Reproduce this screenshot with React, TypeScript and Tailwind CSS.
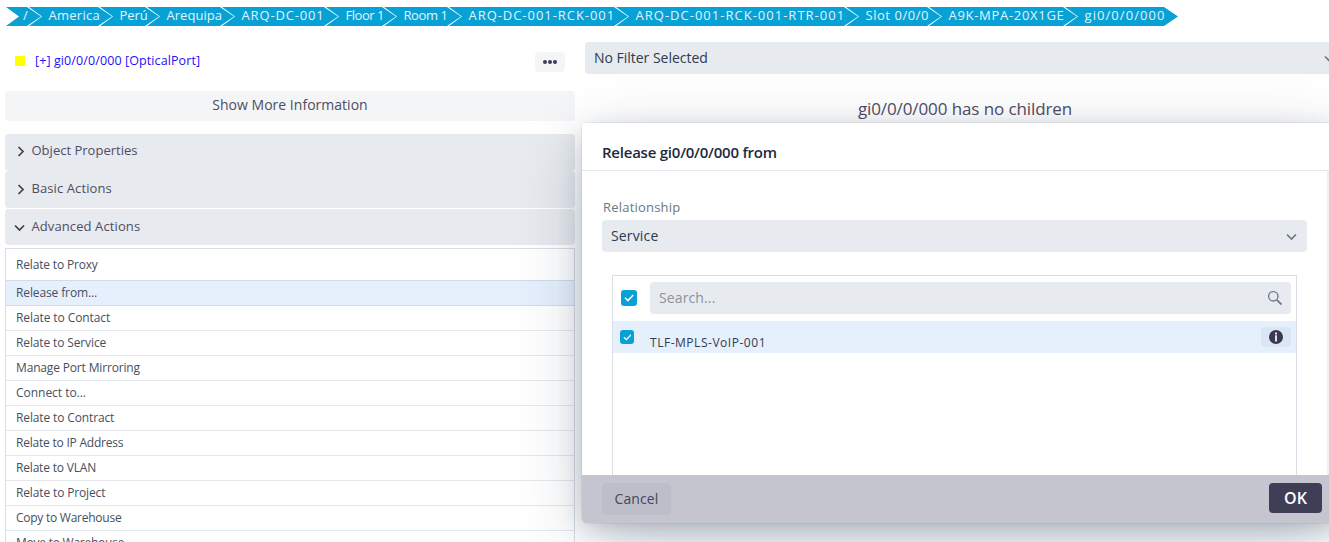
import type { ReactNode } from "react";

const crumbs: { label: string; box: string; text: string }[] = [
  { label: "/", box: "w-[35px]", text: "" },
  { label: "America", box: "w-[83px]", text: "tracking-[0.27px]" },
  { label: "Perú", box: "w-[59px]", text: "tracking-[-0.1px]" },
  { label: "Arequipa", box: "w-[87px]", text: "tracking-[0.04px]" },
  { label: "ARQ-DC-001", box: "w-[116px]", text: "tracking-[0.84px]" },
  { label: "Floor 1", box: "w-[70px]", text: "tracking-[-0.46px]" },
  { label: "Room 1", box: "w-[77px]", text: "tracking-[-0.42px]" },
  { label: "ARQ-DC-001-RCK-001", box: "w-[179px]", text: "tracking-[0.95px]" },
  { label: "ARQ-DC-001-RCK-001-RTR-001", box: "w-[242px]", text: "tracking-[1.01px]" },
  { label: "Slot 0/0/0", box: "w-[95px]", text: "tracking-[0.54px]" },
  { label: "A9K-MPA-20X1GE", box: "w-[148px]", text: "tracking-[0.7px]" },
  { label: "gi0/0/0/000", box: "w-[113px]", text: "tracking-[1.07px]" },
];

const actions: { label: string; text: string }[] = [
  { label: "Relate to Contact", text: "tracking-[-0.09px]" },
  { label: "Relate to Service", text: "tracking-[-0.13px]" },
  { label: "Manage Port Mirroring", text: "tracking-[-0.16px]" },
  { label: "Connect to...", text: "tracking-[-0.03px]" },
  { label: "Relate to Contract", text: "tracking-[-0.13px]" },
  { label: "Relate to IP Address", text: "tracking-[-0.22px]" },
  { label: "Relate to VLAN", text: "tracking-[-0.18px]" },
  { label: "Relate to Project", text: "tracking-[-0.14px]" },
  { label: "Copy to Warehouse", text: "tracking-[-0.25px]" },
  { label: "Move to Warehouse", text: "tracking-[-0.24px]" },
];

function Chevron({ className = "" }: { className?: string }) {
  return (
    <svg className={`shrink-0 ${className}`} width="11" height="8" viewBox="0 0 11 8" fill="none" stroke="currentColor" strokeWidth="1.7">
      <path d="M1 1.5 5.5 6 10 1.5" />
    </svg>
  );
}

function Section({ open = false, className, children }: { open?: boolean; className: string; children: ReactNode }) {
  return (
    <div className={`flex items-start rounded-[4px] bg-[#e7eaee] pl-[9px] text-[13px] leading-5 text-[#4f4d65] ${className}`}>
      <span className="flex h-5 w-[17.5px] shrink-0 items-center pt-[3px] text-[#403d55]">
        {open ? (
          <Chevron />
        ) : (
          <svg className="ml-[3px]" width="8" height="11" viewBox="0 0 8 11" fill="none" stroke="currentColor" strokeWidth="1.7">
            <path d="M1.5 1 6 5.5 1.5 10" />
          </svg>
        )}
      </span>
      {children}
    </div>
  );
}

function Checkbox({ className }: { className: string }) {
  return (
    <span className={`flex shrink-0 items-center justify-center rounded-[3px] bg-[#08a1d5] ${className}`}>
      <svg className="h-[60%] w-[64%]" viewBox="0 0 10 8" fill="none" stroke="white" strokeWidth="1.5">
        <path d="M1 4 3.8 6.7 9 1.3" />
      </svg>
    </span>
  );
}

function Breadcrumbs() {
  return (
    <nav className="flex h-[19px] pl-[18px] text-[13px] leading-4 text-[#e2f3fa]">
      {crumbs.map((c) => (
        <span
          key={c.label}
          className={`-ml-3 h-[19px] shrink-0 whitespace-nowrap bg-[#08a1d5] [clip-path:polygon(0_0,calc(100%-14px)_0,100%_50%,calc(100%-14px)_100%,0_100%,13px_50%)] ${c.label === "/" ? "pl-[17px]" : "pl-[19.5px]"} ${c.box} ${c.text}`}
        >
          {c.label}
        </span>
      ))}
    </nav>
  );
}

function Dialog() {
  return (
    <div className="absolute left-[582px] top-[123px] rounded-[4px] shadow-[0_0_0_1px_rgba(25,45,75,0.05),0_6px_24px_-4px_rgba(25,45,75,0.26),0_18px_64px_-8px_rgba(25,45,75,0.3)]">
      <div className="flex h-[400px] w-[760px] flex-col overflow-hidden rounded-[4px] bg-white">
        <div className="h-12 shrink-0 border-b border-[#e4e7ec] pl-5 pt-[19px] text-[15px] font-semibold leading-5 tracking-[-0.23px] text-[#1c2b3d]">
          Release gi0/0/0/000 from
        </div>
        <div className="mr-[13px] flex min-h-0 flex-1 flex-col border-r-2 border-[#f0f0f0] pl-5 pr-5">
          <div className="mt-[26px] pl-px text-[13px] leading-5 tracking-[0.2px] text-[#6b7685]">Relationship</div>
          <div className="mt-[3px] flex h-8 w-[705px] shrink-0 items-center justify-between rounded-[4px] bg-[#e7eaee] pl-[9px] pr-[10px] text-[14px] tracking-[0.15px] text-[#2e3b4e]">
            <span className="pb-[2px]">Service</span>
            <Chevron className="mt-[2px] text-[#6b7889]" />
          </div>
          <div className="ml-[10px] mt-[23px] w-[685px] flex-1 border border-b-0 border-[#d9dde5]">
            <div className="flex h-[45px] items-center pb-[2px] pl-2">
              <Checkbox className="h-4 w-4" />
              <div className="ml-[13px] flex h-8 w-[641px] items-center justify-between rounded-[4px] bg-[#e7eaee] pl-[9px] pr-[8px] text-[14px] tracking-[0.12px] text-[#8a929e]">
                <span className="pb-px">Search...</span>
                <svg width="16" height="16" viewBox="0 0 16 16" fill="none" stroke="#6f7b8b">
                  <circle cx="6.3" cy="6.3" r="4.7" strokeWidth="1.4" />
                  <path d="m9.8 9.8 4.7 4.7" strokeWidth="1.8" />
                </svg>
              </div>
            </div>
            <div className="flex h-8 items-center bg-[#e6f0fd] pl-[7px] pr-[5px]">
              <Checkbox className="h-[14px] w-[14px]" />
              <span className="ml-4 flex-1 pt-3 text-[12px] leading-5 tracking-[0.53px] text-[#303c4e]">TLF-MPLS-VoIP-001</span>
              <span className="flex h-5 w-[30px] items-center justify-center rounded-[4px] bg-[#dbe6f4]">
                <svg width="14" height="14" viewBox="0 0 14 14">
                  <circle cx="7" cy="7" r="7" fill="#3b3852" />
                  <path d="M6 2.5h2v2H6zM6 5.3h2v6.2H6z" fill="#dbe6f4" />
                </svg>
              </span>
            </div>
          </div>
        </div>
        <div className="flex h-12 shrink-0 items-start justify-between bg-[#c5c5cf] px-5 pt-2 text-[14px]">
          <span className="flex h-8 w-[69px] items-center justify-center rounded-[4px] bg-[#bcbfc9] pb-[2px] tracking-[0.12px] text-[#48455f]">Cancel</span>
          <span className="flex h-[30px] w-[53px] items-center justify-center rounded-[4px] bg-[#403d56] pb-px text-[16px] font-semibold text-white">OK</span>
        </div>
      </div>
    </div>
  );
}

export default function App() {
  return (
    <div className="relative h-[542px] w-full overflow-hidden bg-white pt-[7px] font-['Open_Sans',sans-serif]">
      <Breadcrumbs />
      <div className="flex w-[1340px] gap-[10px] pl-[5px]">
        <div className="w-[570px] shrink-0">
          <div className="mt-[26px] flex h-5 items-center">
            <span className="ml-[10px] mt-[-2px] h-[10px] w-[10px] bg-[#ffff00]" />
            <span className="ml-[10px] mt-[-2px] text-[12.5px] leading-5 tracking-[0.1px] text-[#2412f5]">[+] gi0/0/0/000 [OpticalPort]</span>
            <span className="ml-auto mr-[10px] flex h-5 w-[30px] items-center justify-center gap-[1.2px] rounded-[4px] bg-[#f3f5f7]">
              <i className="h-[3.8px] w-[3.8px] rounded-full bg-[#403d56]" />
              <i className="h-[3.8px] w-[3.8px] rounded-full bg-[#403d56]" />
              <i className="h-[3.8px] w-[3.8px] rounded-full bg-[#403d56]" />
            </span>
          </div>
          <div className="mt-[19px] h-[30px] rounded-[4px] bg-[#f3f5f7] pt-1 text-center text-[14px] leading-5 tracking-[0.02px] text-[#4f4d65]">
            Show More Information
          </div>
          <Section className="mt-[13px] h-[37px] pt-[6px] tracking-[0.01px]">Object Properties</Section>
          <Section className="h-[37px] pt-[7px] tracking-[0.1px]">Basic Actions</Section>
          <Section open className="mt-px h-9 pt-[7px] tracking-[0.1px]">Advanced Actions</Section>
          <div className="mt-[3px] h-[320px] border border-[#d9dde5] text-[12px] text-[#454f5f]">
            <div className="h-[31px] pl-[10px] pt-[6px] leading-5 tracking-[-0.17px]">Relate to Proxy</div>
            <div className="h-[26px] border-y border-[#cfdcee] bg-[#e6f0fd] pl-[10px] pt-[2px] leading-5 tracking-[-0.12px]">Release from...</div>
            {actions.map((a) => (
              <div key={a.label} className={`h-[25px] border-b border-[#e4e7ec] pl-[10px] pt-[2px] leading-5 ${a.text}`}>
                {a.label}
              </div>
            ))}
          </div>
        </div>
        <div className="min-w-0 flex-1">
          <div className="mt-4 flex h-8 items-center justify-between rounded-[4px] bg-[#e7eaee] pl-[9px] pr-[5px] text-[14px] tracking-[-0.02px] text-[#2e3b4e]">
            <span className="pb-[2px]">No Filter Selected</span>
            <Chevron className="mt-px text-[#6b7889]" />
          </div>
          <div className="mt-[23px] w-[760px] text-center text-[17px] leading-6 tracking-[-0.1px] text-[#4f4d65]">gi0/0/0/000 has no children</div>
        </div>
      </div>
      <Dialog />
    </div>
  );
}
